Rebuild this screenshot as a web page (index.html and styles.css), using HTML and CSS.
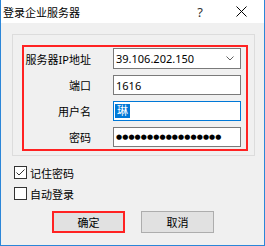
FILE: index.html
```html
<!DOCTYPE html>
<html lang="zh-CN">
<head>
<meta charset="UTF-8">
<meta name="viewport" content="width=device-width, initial-scale=1.0">
<title>登录企业服务器</title>
<link rel="stylesheet" href="styles.css">
</head>
<body>
<div class="window">
    <div class="titlebar">
        <span class="title">登录企业服务器</span>
        <span class="help">?</span>
        <span class="close">
            <svg width="11" height="11" viewBox="0 0 11 11"><path d="M0.5 0.5 L10.5 10.5 M10.5 0.5 L0.5 10.5" stroke="#000" stroke-width="1" fill="none"/></svg>
        </span>
    </div>
    <div class="content">
        <div class="group">
            <div class="mark">
                <div class="form">
                    <label class="label">服务器IP地址</label>
                    <div class="field combo">
                        <span>39.106.202.150</span>
                        <svg class="arrow" width="8" height="5" viewBox="0 0 8 5"><path d="M0.5 0.5 L4 4 L7.5 0.5" stroke="#606060" stroke-width="1" fill="none"/></svg>
                    </div>
                    <label class="label">端口</label>
                    <div class="field"><span>1616</span></div>
                    <label class="label">用户名</label>
                    <div class="field focus"><span class="selected">琳</span></div>
                    <label class="label">密码</label>
                    <div class="field"><span class="dots">●●●●●●●●●●●●●●●●●</span></div>
                </div>
            </div>
        </div>
        <div class="check-row first">
            <span class="check">
                <svg width="11" height="11" viewBox="0 0 11 11"><path d="M1.5 5.5 L4 8 L9.5 2.5" stroke="#333" stroke-width="1" fill="none"/></svg>
            </span>
            <span>记住密码</span>
        </div>
        <div class="check-row">
            <span class="check"></span>
            <span>自动登录</span>
        </div>
        <div class="buttons">
            <button class="btn marked">确定</button>
            <button class="btn">取消</button>
        </div>
    </div>
</div>
</body>
</html>
```

FILE: styles.css
```css
body {
    margin: 0;
}
.window {
    width: 265px;
    height: 246px;
    box-sizing: border-box;
    border: 1px solid #2b86d8;
    border-top: none;
    background: #f0f0f0;
    font-family: "Noto Sans", "Noto Sans CJK SC", sans-serif;
    font-size: 11px;
    color: #000;
}
.titlebar {
    height: 23px;
    background: #fff;
    display: flex;
    align-items: center;
    padding-left: 2px;
}
.title {
    font-size: 11px;
}
.help {
    margin-left: auto;
    width: 36px;
    text-align: center;
    font-size: 13px;
    color: #333;
}
.close {
    width: 46px;
    display: flex;
    justify-content: center;
}
.content {
    padding: 11px 0 0 11px;
}
.group {
    width: 243px;
    height: 122px;
    box-sizing: border-box;
    border: 1px solid #dcdcdc;
    padding: 10px 0 0 9px;
}
.mark {
    width: 226px;
    height: 106px;
    box-sizing: border-box;
    border: 2px solid #f22;
    padding: 1px 0 0 0;
}
.form {
    display: grid;
    grid-template-columns: 67px 128px;
    grid-template-rows: 21px 20px 20px 20px;
    column-gap: 22px;
    row-gap: 6px;
    align-items: center;
}
.label {
    text-align: right;
}
.field {
    height: 100%;
    box-sizing: border-box;
    border: 1px solid #7a7a7a;
    background: #fff;
    display: flex;
    align-items: center;
    padding-left: 2px;
    font-size: 11px;
}
.combo {
    justify-content: space-between;
    padding-right: 6px;
}
.focus {
    border-color: #0078d7;
    padding-left: 1px;
}
.selected {
    background: #0078d7;
    color: #fff;
    padding: 0 2px;
    line-height: 14px;
}
.dots {
    font-family: "DejaVu Sans", sans-serif;
    font-size: 7px;
    letter-spacing: 0.1px;
}
.check-row {
    display: flex;
    align-items: center;
    gap: 3px;
    height: 13px;
    margin: 8px 0 0 2px;
}
.check-row.first {
    margin-top: 10px;
}
.check {
    width: 13px;
    height: 13px;
    box-sizing: border-box;
    border: 1px solid #333;
    background: #fff;
    display: flex;
    align-items: center;
    justify-content: center;
}
.buttons {
    display: flex;
    gap: 16px;
    margin: 11px 0 0 40px;
}
.btn {
    width: 73px;
    height: 22px;
    box-sizing: border-box;
    border: 1px solid #adadad;
    background: #e1e1e1;
    font-family: "Noto Sans CJK SC", sans-serif;
    font-size: 11px;
    padding: 0;
    color: #000;
}
.btn.marked {
    border: 2px solid #f22;
}
```
